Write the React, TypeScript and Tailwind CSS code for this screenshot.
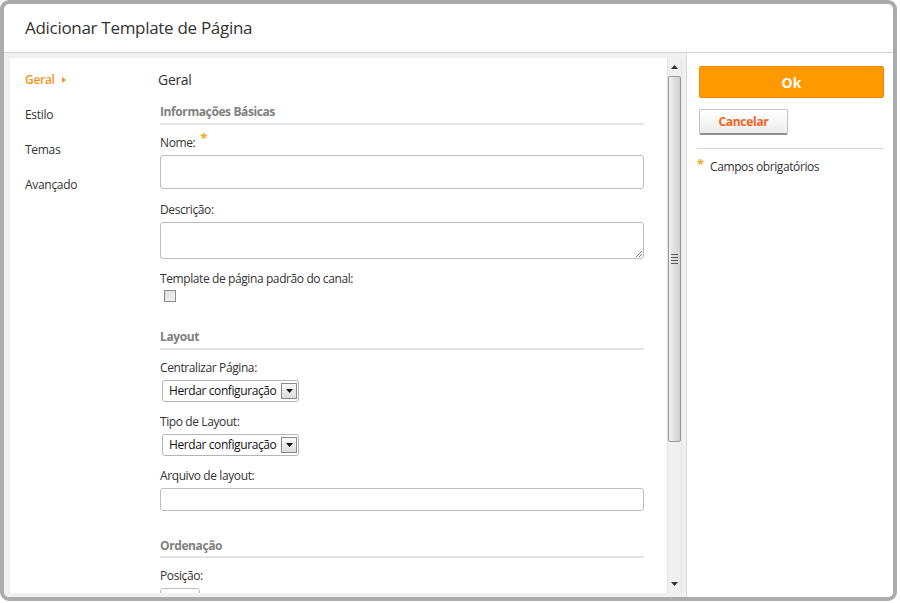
import React from 'react';

const font = { fontFamily: '"Open Sans", "Noto Sans", sans-serif' };

function Label({ text, required, className = '' }: { text: string; required?: boolean; className?: string }) {
  return (
    <div className={`flex items-start text-[12px] leading-[16px] tracking-[-0.4px] text-[#333] ${className}`}>
      <span>{text}</span>
      {required && <span className="ml-[5px] -mt-[5px] text-[13px] font-bold text-[#f7a21b]">*</span>}
    </div>
  );
}

function SectionTitle({ text, className = '' }: { text: string; className?: string }) {
  return (
    <div className={`border-b-2 border-[#e3e3e3] text-[12px] font-bold leading-[16px] tracking-[-0.4px] text-[#808080] ${className}`}>
      {text}
    </div>
  );
}

function Select({ className = '' }: { className?: string }) {
  return (
    <div className={`ml-[2px] flex h-[22px] w-[137px] items-center justify-between rounded-[3px] border border-[#b5b5b5] bg-white pl-[6px] pr-[1px] text-[12px] tracking-[-0.4px] text-[#111] ${className}`}>
      <span className="whitespace-nowrap">Herdar configuração</span>
      <span className="flex h-[16px] w-[16px] shrink-0 items-center justify-center border border-[#8a8a8a] bg-gradient-to-b from-[#fafafa] to-[#dcdcdc]">
        <svg width="7" height="4" viewBox="0 0 7 4">
          <path d="M0 0h7L3.5 4z" fill="#111" />
        </svg>
      </span>
    </div>
  );
}

function Scrollbar() {
  return (
    <div className="flex w-[15px] flex-col border-x border-[#e2e2e2] bg-[#f0f0f0]">
      <div className="flex h-[18px] items-center justify-center">
        <svg width="7" height="4" viewBox="0 0 7 4">
          <path d="M0 4h7L3.5 0z" fill="#333" />
        </svg>
      </div>
      <div className="flex h-[366px] items-center justify-center rounded-[2px] border border-[#9a9a9a] bg-gradient-to-r from-[#f2f2f2] via-[#dedede] to-[#cfcfcf]">
        <div className="flex flex-col gap-[2px]">
          <div className="h-px w-[7px] bg-[#555]" />
          <div className="h-px w-[7px] bg-[#555]" />
          <div className="h-px w-[7px] bg-[#555]" />
          <div className="h-px w-[7px] bg-[#555]" />
        </div>
      </div>
      <div className="flex-1" />
      <div className="flex h-[18px] items-center justify-center">
        <svg width="7" height="4" viewBox="0 0 7 4">
          <path d="M0 0h7L3.5 4z" fill="#333" />
        </svg>
      </div>
    </div>
  );
}

export default function App() {
  return (
    <div className="h-[603px] w-[900px] bg-white" style={font}>
      <div className="flex h-[601px] w-[897px] flex-col overflow-hidden rounded-[9px] border-4 border-[#ababab] bg-white">
        {/* cabeçalho */}
        <div className="flex h-[49px] shrink-0 items-center border-b border-[#d6d6d6] pl-[21px] pb-[1px] text-[17px] tracking-[-0.3px] text-[#333]">
          Adicionar Template de Página
        </div>

        <div className="flex min-h-0 flex-1">
          {/* área principal */}
          <div className="flex w-[682px] bg-[#f0f0f0] pb-[4px] pl-[6px] pr-[4px] pt-[5px]">
            <div className="flex min-h-0 flex-1 overflow-hidden bg-white">
              <div className="flex w-[150px] shrink-0 flex-col gap-[19px] pl-[15px] pt-[14px] text-[12px] leading-[16px] tracking-[-0.3px] text-[#333]">
                <div className="flex items-center font-semibold text-[#f7941d]">
                  Geral
                  <svg className="ml-[7px]" width="4" height="6" viewBox="0 0 4 6">
                    <path d="M0 0l4 3-4 3z" fill="#f7941d" />
                  </svg>
                </div>
                <div>Estilo</div>
                <div>Temas</div>
                <div>Avançado</div>
              </div>

              <div className="flex w-[484px] shrink-0 flex-col pt-[13px]">
                <div className="-ml-[2px] text-[14px] leading-[18px] tracking-[-0.3px] text-[#333]">Geral</div>
                <SectionTitle text="Informações Básicas" className="mt-[15px] pb-[3px]" />

                <Label text="Nome:" required className="mt-[10px]" />
                <div className="mt-[4px] h-[34px] shrink-0 rounded-[3px] border border-[#bdbdbd] bg-white" />

                <Label text="Descrição:" className="mt-[13px]" />
                <div className="relative mt-[4px] h-[37px] shrink-0 rounded-[3px] border border-[#bdbdbd] bg-white">
                  <svg className="absolute bottom-[1px] right-[1px]" width="7" height="7" viewBox="0 0 7 7">
                    <path d="M1 7L7 1M4 7L7 4" stroke="#777" strokeWidth="1" />
                  </svg>
                </div>

                <Label text="Template de página padrão do canal:" className="mt-[12px]" />
                <div className="ml-[4px] mt-[3px] h-[12px] w-[12px] shrink-0 border border-[#8c8c8c] bg-gradient-to-br from-[#dcdcdc] to-[#f6f6f6]" />

                <SectionTitle text="Layout" className="mt-[27px] pb-[3px]" />

                <Label text="Centralizar Página:" className="mt-[10px]" />
                <Select className="mt-[4px] shrink-0" />

                <Label text="Tipo de Layout:" className="mt-[12px]" />
                <Select className="mt-[4px] shrink-0" />

                <Label text="Arquivo de layout:" className="mt-[12px]" />
                <div className="mt-[4px] h-[23px] shrink-0 rounded-[3px] border border-[#bdbdbd] bg-white" />

                <SectionTitle text="Ordenação" className="mt-[27px] pb-[2px]" />

                <Label text="Posição:" className="mt-[10px]" />
                <div className="mt-[4px] h-[22px] w-[40px] shrink-0 rounded-[3px] border border-[#bdbdbd] bg-white" />
              </div>

              <div className="w-[23px] shrink-0" />
              <Scrollbar />
            </div>
          </div>

          {/* barra lateral */}
          <div className="flex w-[207px] flex-col border-l border-[#d9d9d9] bg-white pl-[12px] pr-[9px] pt-[13px]">
            <button className="h-[32px] w-[185px] rounded-[2px] border border-[#ef8a00] bg-[#ff9900] text-[14px] font-bold text-white">
              Ok
            </button>
            <button className="mt-[11px] h-[26px] w-[89px] rounded-[2px] border border-[#c3c3c3] border-b-2 border-b-[#8f8f8f] bg-gradient-to-b from-white to-[#ececec] text-[12px] font-bold tracking-[-0.3px] text-[#f26522]">
              Cancelar
            </button>
            <div className="-ml-[2px] mt-[13px] border-t border-[#d6d6d6]" />
            <div className="-ml-[2px] mt-[10px] flex items-start text-[12px] leading-[16px] tracking-[-0.4px] text-[#333]">
              <span className="-mt-[3px] w-[13px] text-[13px] font-bold text-[#f7a21b]">*</span>
              <span>Campos obrigatórios</span>
            </div>
          </div>
        </div>
      </div>
    </div>
  );
}
